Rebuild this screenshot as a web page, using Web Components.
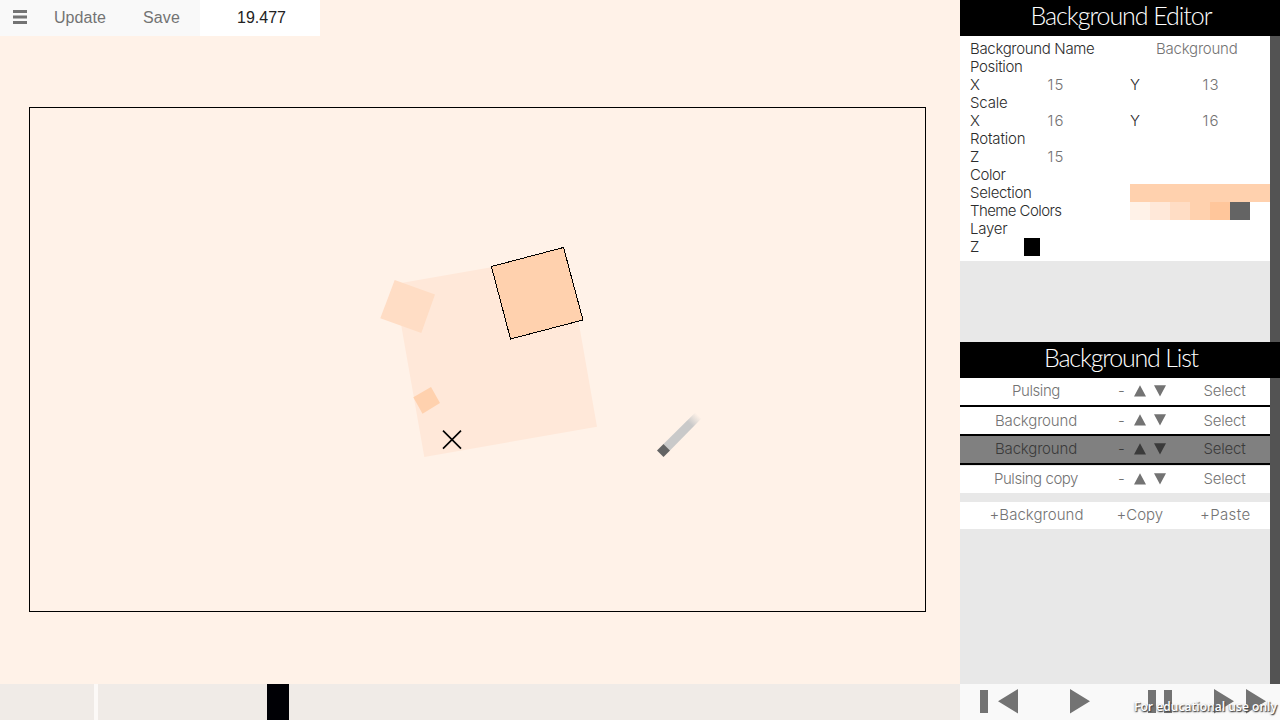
<!DOCTYPE html>
<html lang="en">
<head>
<meta charset="utf-8">
<title>Background Editor</title>
<style>
html,body{margin:0;height:720px;overflow:hidden;background:#fff2e8}
</style>
</head>
<body>
<level-editor></level-editor>
<script>
const define = (name, html, ready) => customElements.define(name, class extends HTMLElement {
  constructor() {
    super();
    const t = document.createElement('template');
    t.innerHTML = html;
    this.attachShadow({ mode: 'open' }).append(t.content.cloneNode(true));
  }
  connectedCallback() { if (ready) ready(this); }
});

/* Single line of text, tracked out or in to occupy the width given by "w". */
define('fit-text', `<style>
:host{display:inline-block;white-space:pre;text-align:left}
span{display:inline-block;white-space:pre}
</style><span></span>`, el => {
  const s = el.shadowRoot.querySelector('span');
  s.textContent = el.getAttribute('text');
  const w = +el.getAttribute('w');
  if (!w) return;
  const n = s.textContent.length;
  s.style.letterSpacing = ((w - s.getBoundingClientRect().width) / n).toFixed(3) + 'px';
  el.style.width = w + 'px';
});

define('tool-bar', `<style>
:host{display:flex;width:320px;height:36px;font:16px/36px "Liberation Sans",Arial,sans-serif;color:#737373}
div{background:#f9f9f9;text-align:center;height:36px}
.m{width:40px;display:flex}.u{width:80px}
.t{width:120px;background:#fff;color:#222;padding-left:3px;box-sizing:border-box}
.s{width:80px;padding-left:3px;box-sizing:border-box}
</style>
<div class="m"><svg width="40" height="36" fill="#737373"><path d="M13 10h14v3H13zM13 15.5h14v3H13zM13 21h14v3H13z"/></svg></div>
<div class="u"><fit-text text="Update" w="52"></fit-text></div>
<div class="s"><fit-text text="Save" w="37"></fit-text></div>
<div class="t"><fit-text text="19.477" w="49"></fit-text></div>`);

define('stage-view', `<style>
:host{display:block;height:684px;width:960px;background:#fff2e8}
svg{display:block}
</style>
<svg width="960" height="684">
<defs><linearGradient id="g" gradientUnits="userSpaceOnUse" x1="663.5" y1="450.5" x2="698.5" y2="415.5">
<stop offset="0" stop-color="#c9c9c9"/><stop offset=".76" stop-color="#c9c9c9"/><stop offset="1" stop-color="#c9c9c9" stop-opacity="0"/></linearGradient></defs>
<path fill="#ffe8d9" d="M394 284.3 566.7 254 597 426.7 424.3 457z"/>
<path fill="#ffddc5" d="M394.7 280 435 294.6 421.3 333 380.3 318.3z"/>
<path fill="#ffd1ae" d="M431 387 440 403 422.5 413.8 413.3 397.3z"/>
<path fill="#ffd1ae" stroke="#000" shape-rendering="crispEdges" d="M491.4 266.5 563.5 247.5 583 320 510.5 339z"/>
<path fill="url(#g)" d="M663.5 444 695.3 412.4 701.4 418.6 670 450.5z"/>
<path fill="#646464" d="M663.5 444 670 450.5 663.5 457 657 450.5z"/>
<path stroke="#000" stroke-width="1.6" d="M443 430.6 461 448.6M461 430.6 443 448.6"/>
<rect x="29.5" y="107.5" width="896" height="504" fill="none" stroke="#000"/>
</svg>`);

define('time-line', `<style>
:host{display:flex;width:960px;height:36px;background:#f0ebe7}
.a{width:4px;margin-left:94px;background:#fcf9f7}.b{width:22px;margin-left:169px;background:#000005}
</style><div class="a"></div><div class="b"></div>`);

define('panel-title', `<style>
:host{display:flex;justify-content:center;height:36px;background:#000;color:#fff;font:300 25px/30px Lato,sans-serif;padding-left:2px}
</style><fit-text></fit-text>`, el => {
  const f = el.shadowRoot.querySelector('fit-text'), n = document.createElement('fit-text');
  n.setAttribute('text', el.getAttribute('text')); n.setAttribute('w', el.getAttribute('w')); f.replaceWith(n);
});

define('prop-sheet', `<style>
:host{display:grid;grid-template-columns:54px 62px 44px 160px;grid-auto-rows:18px;width:310px;height:225px;box-sizing:border-box;background:#fff;padding:4px 0 0 10px;color:#2c2c2c;font:300 15px/17px Inter,sans-serif;overflow:hidden}
.r{grid-column:1/4}.f{grid-column:1/5}.v{color:#737373;text-align:center;padding-left:2px}
.y{grid-column:4;display:grid;grid-template-columns:60px 40px}
.n{color:#737373;padding-left:26px}
.sel{height:18px;background:#ffd1ae}
.th{display:flex;height:18px}.th i{width:20px}
.z{width:16px;height:18px;background:#000}
</style>
<div class="r"><fit-text text="Background Name" w="124.5"></fit-text></div><div class="n"><fit-text text="Background" w="81.5"></fit-text></div>
<div class="f"><fit-text text="Position" w="52.5"></fit-text></div>
<div><fit-text text="X" w="10"></fit-text></div><div class="v"><fit-text text="15" w="17"></fit-text></div><div></div><div class="y"><span><fit-text text="Y" w="10"></fit-text></span><span class="v"><fit-text text="13" w="17"></fit-text></span></div>
<div class="f"><fit-text text="Scale" w="37.5"></fit-text></div>
<div><fit-text text="X" w="10"></fit-text></div><div class="v"><fit-text text="16" w="17"></fit-text></div><div></div><div class="y"><span><fit-text text="Y" w="10"></fit-text></span><span class="v"><fit-text text="16" w="17"></fit-text></span></div>
<div class="f"><fit-text text="Rotation" w="55.5"></fit-text></div>
<div><fit-text text="Z" w="10"></fit-text></div><div class="v"><fit-text text="15" w="17"></fit-text></div><div></div><div></div>
<div class="f"><fit-text text="Color" w="35.5"></fit-text></div>
<div class="r"><fit-text text="Selection" w="61.5"></fit-text></div><div class="sel"></div>
<div class="r"><fit-text text="Theme Colors" w="91.5"></fit-text></div>
<div class="th"><i style="background:#fff2e8"></i><i style="background:#ffe8d9"></i><i style="background:#ffddc5"></i><i style="background:#ffd1ae"></i><i style="background:#ffc69b"></i><i style="background:#646464"></i></div>
<div class="f"><fit-text text="Layer" w="37.5"></fit-text></div>
<div><fit-text text="Z" w="10"></fit-text></div><div class="z"></div>`);

define('layer-row', `<style>
:host{display:grid;grid-template-columns:152px 14px 64px 69px;height:27px;background:#fff;color:#737373;font:300 15px/var(--line,26px) Inter,sans-serif;text-align:center}
:host([selected]){background:#808080;color:#3a3a3a}
svg{display:block}
.d{text-align:left;padding-left:6px}
</style>
<div class="n"></div><div class="d"><fit-text text="-" w="6"></fit-text></div>
<svg width="64" height="27" fill="currentColor"><path d="M14 7.3 20 18.6H8zM34 18.6 28 7.3H40z"/></svg>
<div class="s"><fit-text text="Select" w="42"></fit-text></div>`, el => {
  const n = document.createElement('fit-text');
  n.setAttribute('text', el.getAttribute('text')); n.setAttribute('w', el.getAttribute('w'));
  el.shadowRoot.querySelector('.n').append(n);
});

define('action-row', `<style>
:host{display:flex;height:27px;margin-top:9px;background:#fff;color:#737373;font:300 15px/26px Inter,sans-serif}
.a{margin-left:29.5px}.b{margin-left:33px}.c{margin-left:37px}
</style>
<fit-text class="a" text="+Background" w="94"></fit-text><fit-text class="b" text="+Copy" w="46.5"></fit-text><fit-text class="c" text="+Paste" w="50.5"></fit-text>`);

define('play-bar', `<style>
:host{display:block;position:relative;width:320px;height:36px;background:#f9f9f9}
svg{display:block}
.w{position:absolute;left:174px;top:13px;color:#fff;font:600 12px/20px "Open Sans",sans-serif;text-shadow:1px 1px 1px #444,0 1px 2px #666}
</style>
<svg width="320" height="36" fill="#737373"><path d="M20 6h8v23h-8zM58 5v24.5L38 17.3zM110 5v24.5l20-12.2zM188 6h8v23h-8zM204 6h8v23h-8zM254 5v24.5l20-12.2zM286 5v24.5l20-12.2z"/></svg>
<fit-text class="w" text="For educational use only" w="143"></fit-text>`);

define('level-editor', `<style>
:host{display:grid;grid-template-columns:960px 320px;width:1280px;height:720px}
.left{position:relative}
tool-bar{position:absolute;left:0;top:0}
.right{display:grid;grid-template-rows:342px 342px 36px;background:#e8e8e8}
.body{border-right:10px solid #535353;height:306px}
.list{background:#000;display:flex;flex-direction:column;gap:2px}
.list layer-row:nth-child(2){--line:27px}
.list layer-row:nth-child(4){box-shadow:0 -1px #e8e8e8;margin-top:1px}
</style>
<div class="left"><stage-view></stage-view><tool-bar></tool-bar><time-line></time-line></div>
<div class="right">
<section><panel-title text="Background Editor" w="181"></panel-title><div class="body"><prop-sheet></prop-sheet></div></section>
<section><panel-title text="Background List" w="154"></panel-title><div class="body"><div class="list">
<layer-row text="Pulsing" w="48"></layer-row><layer-row text="Background" w="82"></layer-row><layer-row selected text="Background" w="82"></layer-row><layer-row text="Pulsing copy" w="84"></layer-row></div>
<action-row></action-row></div></section>
<play-bar></play-bar>
</div>`);
</script>
</body>
</html>
